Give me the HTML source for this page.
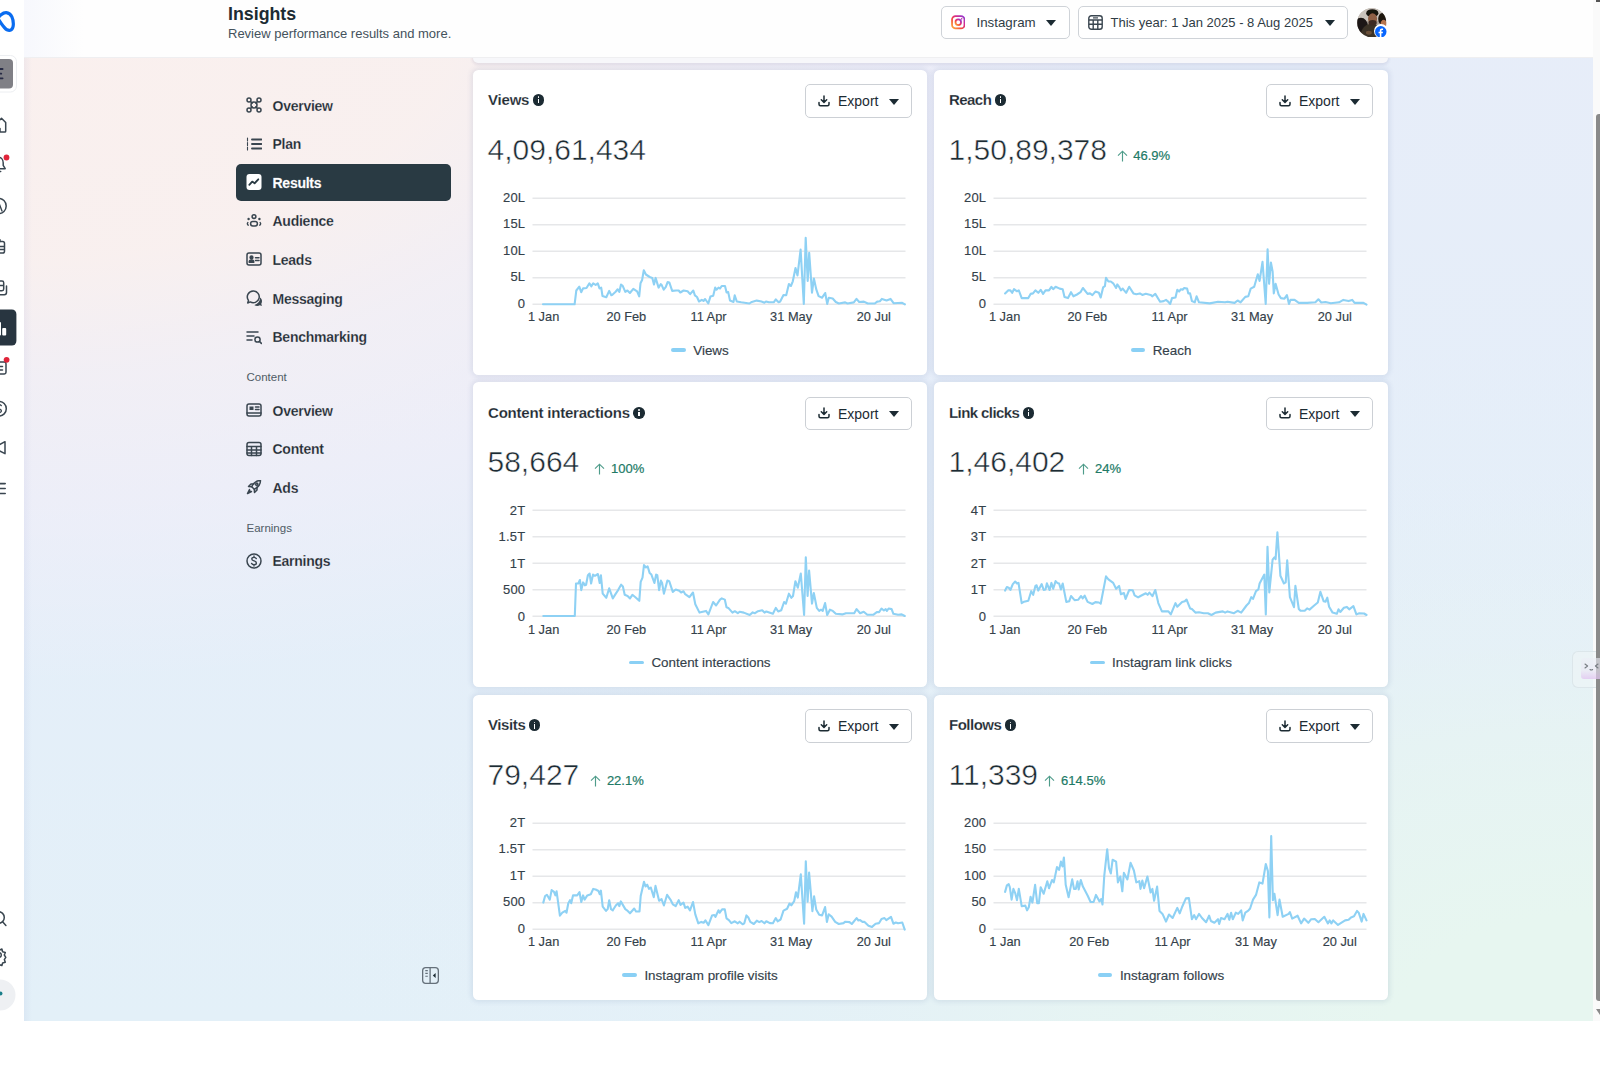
<!DOCTYPE html>
<html><head><meta charset="utf-8"><style>
*{box-sizing:border-box;margin:0;padding:0}
html,body{width:1600px;height:1067px;overflow:hidden;background:#fff;font-family:"Liberation Sans", sans-serif;color:#1c2b33}
#main{position:absolute;left:24px;top:0;width:1569px;height:1021px;overflow:hidden;
 background:radial-gradient(ellipse 1100px 650px at 0px 0px,rgba(250,240,238,1) 0%,rgba(250,240,238,0.92) 40%,rgba(247,239,243,0.68) 58%,rgba(244,238,248,0.48) 80%,rgba(240,238,248,0) 105%),radial-gradient(ellipse 1300px 700px at 1569px 1021px,rgba(231,246,240,1) 0%,rgba(231,246,240,1) 15%,rgba(231,245,241,0.7) 40%,rgba(230,243,244,0.45) 55%,rgba(230,241,247,0.2) 75%,rgba(230,240,248,0) 100%),linear-gradient(to bottom,#e7edf9 0%,#e5eef9 45%,#e3f0f8 100%)}
#hdr{position:absolute;left:0;top:0;width:1569px;height:58px;background:linear-gradient(to right,#f7f8fd 0,#fefefe 60px);border-bottom:1px solid #efeff1}
.strip{position:absolute;left:449px;top:57px;width:915px;height:5.5px;background:#f7f7fa;border-radius:0 0 5px 5px;box-shadow:0 1px 3px 1px rgba(60,60,120,0.10)}
.card{position:absolute;width:454px;height:305px;background:#fff;border-radius:5.5px;box-shadow:0 0 5px 2px rgba(60,90,150,0.11)}
.ttl{position:absolute;left:15px;top:20.5px;height:20px;line-height:20px;font-size:15px;font-weight:700;letter-spacing:-0.2px;white-space:nowrap;color:#1e2a32;-webkit-text-stroke:0.3px rgba(255,255,255,0.5)}
.info{position:relative;display:inline-block;vertical-align:top;margin-left:3.5px;top:4.3px;width:11.5px;height:11.5px;border-radius:50%;background:#1c2b33}
.info::before{content:"";position:absolute;left:5px;top:2.2px;width:1.6px;height:1.6px;background:#fff;border-radius:1px}
.info::after{content:"";position:absolute;left:5px;top:4.8px;width:1.6px;height:4.4px;background:#fff}
.exp{position:absolute;left:332px;top:14.5px;width:107px;height:33.5px;border:1px solid #ccd0d5;border-radius:5px;background:#fff}
.expt{position:absolute;left:32px;top:7px;font-size:14px;line-height:18px;white-space:nowrap}
.tri{position:absolute;width:0;height:0;border-left:5.2px solid transparent;border-right:5.2px solid transparent;border-top:6px solid #1c2b33}
.num{position:absolute;left:14.5px;top:60px;font-size:30px;line-height:40px;white-space:nowrap;color:#1c2b33;-webkit-text-stroke:0.5px #fff}
.pct{position:absolute;top:81.5px;height:16px;font-size:13px;line-height:16px;color:#217a66;white-space:nowrap;-webkit-text-stroke:0.2px #217a66}
.plot{position:absolute;left:0;top:0}
.yl{position:absolute;left:0;width:52.3px;text-align:right;font-size:13px;letter-spacing:0.2px;line-height:16px;color:#34414a;-webkit-text-stroke:0.15px #34414a}
.xl{position:absolute;top:239.3px;width:80px;text-align:center;font-size:12.8px;line-height:16px;color:#34414a;-webkit-text-stroke:0.15px #34414a}
.leg{position:absolute;left:0;top:272px;width:454px;text-align:center;font-size:13.4px;line-height:17px;color:#34414a;white-space:nowrap;-webkit-text-stroke:0.15px #34414a}
.sw{display:inline-block;width:14.5px;height:3.2px;border-radius:2px;background:#8ad0f5;vertical-align:middle;margin-right:7.5px;position:relative;top:-1px}
.sel{position:absolute;left:211.7px;width:215px;height:36.5px;background:#293a43;border-radius:5px}
.nic{position:absolute;left:222px}
.nt{position:absolute;left:248.5px;height:20px;line-height:20px;font-size:14px;letter-spacing:-0.25px;font-weight:700;white-space:nowrap;color:#1e2a32;-webkit-text-stroke:0.35px rgba(243,239,244,0.55)}
.sec{position:absolute;left:222.5px;height:16px;line-height:16px;font-size:11.5px;color:#4f5b65}
.hbtn{position:absolute;top:6px;height:33px;border:1px solid #cfd3d8;border-radius:5px;background:#fff}
</style></head><body>

<div id="main">
<div class="strip"></div><div style="position:absolute;left:0;top:57px;width:8px;height:964px;background:linear-gradient(to right,rgba(110,120,190,0.07),rgba(110,120,190,0))"></div>
<svg class="nic" style="top:97px" width="16" height="16" viewBox="0 0 16 16" fill="none" stroke="#3a4650" stroke-width="1.5" stroke-linecap="round" stroke-linejoin="round"><circle cx="3" cy="3" r="2" /><circle cx="13" cy="3" r="2"/><circle cx="3" cy="13" r="2"/><circle cx="13" cy="13" r="2"/><circle cx="8" cy="8" r="3"/><path d="M4.5 4.5l1.6 1.6M11.5 4.5L9.9 6.1M4.5 11.5l1.6-1.6M11.5 11.5L9.9 9.9"/></svg><div class="nt" style="top:95.5px">Overview</div><svg class="nic" style="top:135.5px" width="16" height="16" viewBox="0 0 16 16" fill="none" stroke="#3a4650" stroke-width="1.5" stroke-linecap="round" stroke-linejoin="round"><path d="M6 3.5h9.5M6 8h9.5M6 12.5h9.5" stroke-width="1.9"/><path d="M1.5 2v3M1.5 6.5v3M1.5 11v3" stroke-width="1.1"/></svg><div class="nt" style="top:134.0px">Plan</div><div class="sel" style="top:164px"></div><svg class="nic" style="top:174px" width="16" height="16" viewBox="0 0 16 16"><rect x="0.5" y="0" width="15" height="16" rx="3" fill="#fff"/><path d="M3.3 10.8L6.2 7.6 8.6 9.3 12.3 5.3" fill="none" stroke="#293a43" stroke-width="1.8" stroke-linecap="round" stroke-linejoin="round"/></svg><div class="nt" style="top:172.5px;color:#fff">Results</div><svg class="nic" style="top:212.5px" width="16" height="16" viewBox="0 0 16 16" fill="none" stroke="#3a4650" stroke-width="1.5" stroke-linecap="round" stroke-linejoin="round"><circle cx="8" cy="3.6" r="1.9"/><rect x="4.6" y="8.6" width="6.8" height="4.4" rx="2.2"/><circle cx="2.6" cy="6" r="1.2" fill="#3a4650" stroke="none"/><circle cx="13.4" cy="6" r="1.2" fill="#3a4650" stroke="none"/><path d="M2.2 12.2c-.9-.6-1.1-1.8-.4-2.6M13.8 12.2c.9-.6 1.1-1.8.4-2.6" stroke-width="1.4"/></svg><div class="nt" style="top:211.0px">Audience</div><svg class="nic" style="top:251px" width="16" height="16" viewBox="0 0 16 16" fill="none" stroke="#3a4650" stroke-width="1.5" stroke-linecap="round" stroke-linejoin="round"><rect x="1" y="2" width="14" height="12" rx="2"/><circle cx="5.5" cy="6.5" r="1.4" fill="#3a4650"/><path d="M3.2 11.2c0-1.4 1-2.2 2.3-2.2s2.3.8 2.3 2.2z" fill="#3a4650"/><path d="M9.5 6.8h3.5M9.5 9.5h3.5"/></svg><div class="nt" style="top:249.5px">Leads</div><svg class="nic" style="top:290px" width="16" height="16" viewBox="0 0 16 16" fill="none" stroke="#3a4650" stroke-width="1.5" stroke-linecap="round" stroke-linejoin="round"><path d="M7.4 1a5.9 5.9 0 1 1-3.2 10.9L1.7 13l.8-2.6A5.9 5.9 0 0 1 7.4 1z"/><path d="M14.2 7.6c1.1.9 1.8 2.2 1.8 3.7 0 .9-.3 1.8-.7 2.5l.6 2.1-2.1-.6c-.7.4-1.6.6-2.5.6-1.1 0-2.2-.3-3-.9 3.2-.6 5.6-3.5 5.9-7.4z" fill="#3a4650" stroke="none"/></svg><div class="nt" style="top:288.5px">Messaging</div><svg class="nic" style="top:328.5px" width="16" height="16" viewBox="0 0 16 16" fill="none" stroke="#3a4650" stroke-width="1.5" stroke-linecap="round" stroke-linejoin="round"><path d="M1 3h11M1 7h7M1 11h5"/><circle cx="11.5" cy="10.5" r="2.6"/><path d="M13.4 12.4l2 2"/></svg><div class="nt" style="top:327.0px">Benchmarking</div><svg class="nic" style="top:402px" width="16" height="16" viewBox="0 0 16 16" fill="none" stroke="#3a4650" stroke-width="1.5" stroke-linecap="round" stroke-linejoin="round"><rect x="1" y="2" width="14" height="12" rx="2"/><path d="M1 11h14"/><rect x="3.5" y="4.5" width="4" height="3.5" fill="#3a4650" stroke="none"/><path d="M9.5 5h3.5M9.5 7.5h3.5"/></svg><div class="nt" style="top:400.5px">Overview</div><svg class="nic" style="top:440.5px" width="16" height="16" viewBox="0 0 16 16" fill="none" stroke="#3a4650" stroke-width="1.5" stroke-linecap="round" stroke-linejoin="round"><rect x="1" y="1.5" width="14" height="13" rx="2"/><path d="M1 5.5h14M1 9h14M1 12h14M5.5 5.5v9M10.5 5.5v9"/></svg><div class="nt" style="top:439.0px">Content</div><svg class="nic" style="top:479px" width="16" height="16" viewBox="0 0 16 16" fill="none" stroke="#3a4650" stroke-width="1.5" stroke-linecap="round" stroke-linejoin="round"><path d="M14.5 1.5c-4 0-7 2.5-8.8 6.2l2.6 2.6c3.7-1.8 6.2-4.8 6.2-8.8z"/><path d="M5.7 7.7L2.5 7.5 5 5h3M8.3 10.3l.2 3.2L11 11V8"/><circle cx="10.8" cy="5.2" r="1.1"/><path d="M3.5 10.5l-2 4 4-2" fill="#3a4650"/></svg><div class="nt" style="top:477.5px">Ads</div><svg class="nic" style="top:552.5px" width="16" height="16" viewBox="0 0 16 16" fill="none" stroke="#3a4650" stroke-width="1.5" stroke-linecap="round" stroke-linejoin="round"><circle cx="8" cy="8" r="7"/><path d="M10.3 5.6c-.4-.8-1.2-1.2-2.3-1.2-1.3 0-2.2.7-2.2 1.7 0 2.4 4.6 1.3 4.6 3.8 0 1-.9 1.8-2.4 1.8-1.1 0-2-.5-2.4-1.3M8 3v1.4M8 11.7v1.3" stroke-width="1.4"/></svg><div class="nt" style="top:551.0px">Earnings</div><div class="sec" style="top:369px">Content</div><div class="sec" style="top:520px">Earnings</div>
<svg style="position:absolute;left:398px;top:967px" width="17" height="17" viewBox="0 0 17 17" fill="none" stroke="#65707a" stroke-width="1.3"><rect x="0.65" y="0.65" width="15.7" height="15.7" rx="3"/><path d="M8.1 0.6v15.8"/><path d="M3.3 3.6h2.5M3.3 6.4h2.5M3.3 9.2h2.5" stroke-width="1.1"/><path d="M13.6 6v5l-2.8-2.5z" fill="#1c2b33" stroke="none"/></svg>
</div>
<div id="cards">
<div class="card" style="left:473px;top:69.5px">
<div class="ttl" style="letter-spacing:-0.2px">Views<span class="info"></span></div>
<div class="exp"><svg width="12" height="12" viewBox="0 0 12 12" style="position:absolute;left:12px;top:9.5px"><path d="M6 1v6.2M3.3 4.8L6 7.4l2.7-2.6M1 7.5v1.8c0 .9.6 1.5 1.5 1.5h7c.9 0 1.5-.6 1.5-1.5V7.5" fill="none" stroke="#1c2b33" stroke-width="1.5" stroke-linecap="round" stroke-linejoin="round"/></svg><span class="expt">Export</span><span class="tri" style="left:83px;top:13.5px"></span></div>
<div class="num">4,09,61,434</div>
<svg class="plot" width="454" height="305" viewBox="0 0 454 305"><line x1="59.5" x2="432.5" y1="128.3" y2="128.3" stroke="#e6e7e9" stroke-width="1.5"/><line x1="59.5" x2="432.5" y1="154.8" y2="154.8" stroke="#e6e7e9" stroke-width="1.5"/><line x1="59.5" x2="432.5" y1="181.3" y2="181.3" stroke="#e6e7e9" stroke-width="1.5"/><line x1="59.5" x2="432.5" y1="207.8" y2="207.8" stroke="#e6e7e9" stroke-width="1.5"/><line x1="59.5" x2="432.5" y1="234.3" y2="234.3" stroke="#e6e7e9" stroke-width="1.5"/><polyline points="70.0,234.3 101.6,234.3 103.3,220.5 106.3,216.7 108.2,222.2 110.1,218.4 113.5,218.0 116.4,213.3 118.4,216.3 120.2,213.3 122.7,215.0 124.8,213.3 126.5,218.4 128.2,217.6 129.5,226.0 133.3,227.3 136.2,220.9 138.3,225.2 139.4,224.7 142.6,221.8 144.7,219.3 146.4,221.8 148.0,214.6 149.7,215.9 152.3,221.8 154.4,220.5 156.9,223.0 160.3,218.8 164.1,221.4 166.2,226.4 167.5,213.3 169.1,210.0 170.8,200.3 172.9,204.5 176.7,207.0 179.3,207.9 181.0,214.6 182.6,207.9 185.6,217.6 187.7,214.2 188.6,214.8 190.7,219.7 192.7,217.2 194.7,212.0 196.3,212.4 199.2,220.9 203.2,220.5 205.7,220.5 207.3,222.5 210.6,220.5 214.6,221.3 217.1,224.1 220.3,220.5 221.9,225.4 224.0,227.0 226.0,231.5 228.8,229.8 230.5,231.0 232.1,229.0 235.3,233.5 237.4,226.6 240.2,225.8 242.2,217.6 243.5,219.7 245.5,217.6 247.1,218.5 248.7,216.0 252.0,216.0 253.6,222.5 255.2,222.1 257.0,230.6 260.5,231.9 261.7,225.4 263.8,231.5 268.2,232.3 276.4,233.5 278.8,231.9 283.7,230.6 288.5,231.5 291.4,232.7 293.0,231.5 295.9,232.3 300.7,232.3 302.8,229.4 305.6,232.3 307.2,231.5 310.5,225.0 313.2,225.3 315.9,214.0 317.9,216.0 319.8,211.3 322.5,198.0 324.5,205.4 327.6,179.6 330.8,233.9 332.7,167.9 334.7,210.9 336.2,182.8 339.0,222.6 340.9,208.5 343.2,219.1 345.6,226.1 349.1,227.7 352.2,223.0 354.2,233.9 355.8,227.7 359.7,228.5 362.8,232.0 365.9,233.5 372.2,232.4 374.5,233.5 380.8,232.4 383.5,228.9 386.2,232.0 390.9,231.6 394.8,233.5 401.8,233.5 404.2,231.6 406.9,231.2 408.9,228.9 413.6,230.4 417.5,228.9 420.6,233.2 429.2,232.8 431.9,234.3" fill="none" stroke="#8ed1f4" stroke-width="2.1" stroke-linejoin="round" stroke-linecap="round"/></svg>
<div class="yl" style="top:120.30000000000001px">20L</div>
<div class="yl" style="top:146.8px">15L</div>
<div class="yl" style="top:173.3px">10L</div>
<div class="yl" style="top:199.8px">5L</div>
<div class="yl" style="top:226.3px">0</div>
<div class="xl" style="left:30.599999999999994px">1 Jan</div>
<div class="xl" style="left:113.30000000000001px">20 Feb</div>
<div class="xl" style="left:195.5px">11 Apr</div>
<div class="xl" style="left:278.1px">31 May</div>
<div class="xl" style="left:360.8px">20 Jul</div>
<div class="leg"><span class="sw"></span>Views</div>
</div><div class="card" style="left:934px;top:69.5px">
<div class="ttl" style="letter-spacing:-0.55px">Reach<span class="info"></span></div>
<div class="exp"><svg width="12" height="12" viewBox="0 0 12 12" style="position:absolute;left:12px;top:9.5px"><path d="M6 1v6.2M3.3 4.8L6 7.4l2.7-2.6M1 7.5v1.8c0 .9.6 1.5 1.5 1.5h7c.9 0 1.5-.6 1.5-1.5V7.5" fill="none" stroke="#1c2b33" stroke-width="1.5" stroke-linecap="round" stroke-linejoin="round"/></svg><span class="expt">Export</span><span class="tri" style="left:83px;top:13.5px"></span></div>
<div class="num">1,50,89,378</div>
<div class="pct" style="left:183px"><svg width="11" height="12" viewBox="0 0 11 12" style="position:absolute;left:-0.5px;top:-1px"><path d="M5.5 11.4V1.3M1 5.6L5.5 1.2 10 5.6" fill="none" stroke="#4e9c8a" stroke-width="1.15"/></svg><span style="position:absolute;left:16.3px;top:-3px">46.9%</span></div>
<svg class="plot" width="454" height="305" viewBox="0 0 454 305"><line x1="59.5" x2="432.5" y1="128.3" y2="128.3" stroke="#e6e7e9" stroke-width="1.5"/><line x1="59.5" x2="432.5" y1="154.8" y2="154.8" stroke="#e6e7e9" stroke-width="1.5"/><line x1="59.5" x2="432.5" y1="181.3" y2="181.3" stroke="#e6e7e9" stroke-width="1.5"/><line x1="59.5" x2="432.5" y1="207.8" y2="207.8" stroke="#e6e7e9" stroke-width="1.5"/><line x1="59.5" x2="432.5" y1="234.3" y2="234.3" stroke="#e6e7e9" stroke-width="1.5"/><polyline points="71.1,223.4 74.1,220.4 76.4,220.4 78.2,222.8 80.0,219.2 83.0,221.3 84.8,220.4 87.7,228.1 94.3,228.1 96.6,223.9 99.0,223.4 101.4,220.4 104.3,222.8 106.7,219.8 109.1,223.9 111.5,220.4 115.0,220.4 117.4,216.8 119.2,219.2 121.6,216.8 125.7,218.6 128.7,219.2 130.5,226.9 134.0,228.1 137.0,222.2 139.4,226.3 143.0,224.5 146.5,222.2 148.9,218.0 153.6,223.9 156.0,223.4 158.4,225.1 161.4,221.6 164.9,222.8 166.7,227.5 169.1,217.4 170.9,216.2 172.0,207.9 174.4,211.5 176.8,211.5 179.2,213.3 182.1,218.0 183.3,214.4 185.1,216.8 186.9,220.4 188.7,218.6 192.2,222.8 195.2,216.8 199.4,223.4 202.3,224.2 205.9,223.4 208.3,224.9 211.8,223.7 216.6,224.9 218.4,226.3 221.3,223.9 226.1,231.7 229.6,231.1 232.0,229.9 233.8,231.3 236.2,234.0 238.0,228.1 241.5,227.5 243.3,219.8 245.1,221.6 246.9,219.2 248.6,219.8 250.2,218.0 253.1,218.6 254.3,223.4 256.1,223.4 257.9,231.1 260.8,232.3 262.6,226.3 265.0,232.3 275.7,233.4 284.0,231.7 291.1,232.3 293.5,231.7 300.6,232.9 303.6,230.5 306.6,232.3 311.3,226.9 314.3,226.3 316.7,218.6 320.2,216.8 323.8,204.3 325.6,210.9 328.5,191.9 331.7,234.0 333.6,179.4 335.1,213.8 336.9,192.5 338.6,201.4 339.8,223.4 341.6,213.8 344.6,224.5 346.9,228.1 350.5,228.7 352.9,225.1 355.0,234.0 356.5,229.9 360.6,229.9 364.8,232.9 373.1,232.9 381.4,232.3 384.4,229.3 387.3,232.5 391.5,232.0 396.8,233.2 405.1,232.3 409.3,229.9 414.6,231.1 418.2,229.9 420.6,232.9 429.5,232.9 432.5,234.6" fill="none" stroke="#8ed1f4" stroke-width="2.1" stroke-linejoin="round" stroke-linecap="round"/></svg>
<div class="yl" style="top:120.30000000000001px">20L</div>
<div class="yl" style="top:146.8px">15L</div>
<div class="yl" style="top:173.3px">10L</div>
<div class="yl" style="top:199.8px">5L</div>
<div class="yl" style="top:226.3px">0</div>
<div class="xl" style="left:30.599999999999994px">1 Jan</div>
<div class="xl" style="left:113.30000000000001px">20 Feb</div>
<div class="xl" style="left:195.5px">11 Apr</div>
<div class="xl" style="left:278.1px">31 May</div>
<div class="xl" style="left:360.8px">20 Jul</div>
<div class="leg"><span class="sw"></span>Reach</div>
</div><div class="card" style="left:473px;top:382.3px">
<div class="ttl" style="letter-spacing:-0.2px">Content interactions<span class="info"></span></div>
<div class="exp"><svg width="12" height="12" viewBox="0 0 12 12" style="position:absolute;left:12px;top:9.5px"><path d="M6 1v6.2M3.3 4.8L6 7.4l2.7-2.6M1 7.5v1.8c0 .9.6 1.5 1.5 1.5h7c.9 0 1.5-.6 1.5-1.5V7.5" fill="none" stroke="#1c2b33" stroke-width="1.5" stroke-linecap="round" stroke-linejoin="round"/></svg><span class="expt">Export</span><span class="tri" style="left:83px;top:13.5px"></span></div>
<div class="num">58,664</div>
<div class="pct" style="left:121.75px"><svg width="11" height="12" viewBox="0 0 11 12" style="position:absolute;left:-0.5px;top:-1px"><path d="M5.5 11.4V1.3M1 5.6L5.5 1.2 10 5.6" fill="none" stroke="#4e9c8a" stroke-width="1.15"/></svg><span style="position:absolute;left:16.3px;top:-3px">100%</span></div>
<svg class="plot" width="454" height="305" viewBox="0 0 454 305"><line x1="59.5" x2="432.5" y1="128.3" y2="128.3" stroke="#e6e7e9" stroke-width="1.5"/><line x1="59.5" x2="432.5" y1="154.8" y2="154.8" stroke="#e6e7e9" stroke-width="1.5"/><line x1="59.5" x2="432.5" y1="181.3" y2="181.3" stroke="#e6e7e9" stroke-width="1.5"/><line x1="59.5" x2="432.5" y1="207.8" y2="207.8" stroke="#e6e7e9" stroke-width="1.5"/><line x1="59.5" x2="432.5" y1="234.3" y2="234.3" stroke="#e6e7e9" stroke-width="1.5"/><polyline points="70.3,234.0 101.8,234.0 103.0,201.5 105.3,201.5 106.9,198.0 108.3,208.1 110.1,200.4 111.9,203.3 113.1,202.7 114.9,193.2 116.6,191.5 118.1,201.5 120.0,192.6 122.0,193.8 124.9,192.0 126.7,201.0 127.9,193.2 129.7,211.6 133.3,215.8 136.2,206.3 139.8,216.4 142.8,211.6 145.1,208.1 148.1,202.7 149.9,204.5 151.7,212.8 154.6,214.0 157.0,216.4 159.4,212.8 162.4,215.2 166.3,218.8 167.7,199.8 169.5,195.6 171.0,183.1 173.0,185.5 174.6,184.3 176.6,190.9 178.4,192.6 181.4,201.0 183.1,192.6 184.3,193.2 186.1,208.1 187.9,198.6 189.1,201.0 190.9,211.7 194.4,198.6 196.2,199.2 199.8,209.9 202.7,207.5 206.3,208.7 208.1,210.5 210.5,209.3 212.2,212.2 216.4,215.2 220.0,210.5 222.3,222.3 226.5,230.6 233.0,228.9 235.4,232.4 240.1,220.0 243.1,223.5 247.0,217.6 248.8,216.4 251.8,217.6 253.5,225.3 255.3,225.9 259.5,230.6 261.8,229.2 264.8,231.2 266.6,229.7 270.8,230.6 276.7,233.0 279.7,230.4 282.0,231.2 285.0,229.2 289.2,228.3 291.5,230.6 293.3,229.5 299.9,231.8 302.8,225.9 305.2,229.5 308.2,228.3 311.1,220.0 312.9,221.7 315.9,211.7 318.3,215.8 320.0,214.0 322.4,199.2 324.8,205.7 327.8,191.5 331.1,233.0 332.8,175.4 334.6,214.0 336.1,188.5 339.0,221.7 340.8,211.0 343.8,225.9 346.2,228.9 348.0,227.7 349.7,228.9 352.1,221.1 354.2,233.0 356.9,227.7 359.8,228.9 362.8,231.8 369.3,232.4 372.9,231.2 381.2,231.2 383.6,227.1 387.1,231.2 390.7,229.7 394.3,232.8 400.2,232.8 403.8,230.1 406.1,230.1 408.5,226.5 410.9,228.5 412.7,227.1 413.9,228.9 415.6,226.5 418.6,227.1 420.4,231.8 425.1,232.8 428.7,232.4 431.7,234.0" fill="none" stroke="#8ed1f4" stroke-width="2.1" stroke-linejoin="round" stroke-linecap="round"/></svg>
<div class="yl" style="top:120.30000000000001px">2T</div>
<div class="yl" style="top:146.8px">1.5T</div>
<div class="yl" style="top:173.3px">1T</div>
<div class="yl" style="top:199.8px">500</div>
<div class="yl" style="top:226.3px">0</div>
<div class="xl" style="left:30.599999999999994px">1 Jan</div>
<div class="xl" style="left:113.30000000000001px">20 Feb</div>
<div class="xl" style="left:195.5px">11 Apr</div>
<div class="xl" style="left:278.1px">31 May</div>
<div class="xl" style="left:360.8px">20 Jul</div>
<div class="leg"><span class="sw"></span>Content interactions</div>
</div><div class="card" style="left:934px;top:382.3px">
<div class="ttl" style="letter-spacing:-0.58px">Link clicks<span class="info"></span></div>
<div class="exp"><svg width="12" height="12" viewBox="0 0 12 12" style="position:absolute;left:12px;top:9.5px"><path d="M6 1v6.2M3.3 4.8L6 7.4l2.7-2.6M1 7.5v1.8c0 .9.6 1.5 1.5 1.5h7c.9 0 1.5-.6 1.5-1.5V7.5" fill="none" stroke="#1c2b33" stroke-width="1.5" stroke-linecap="round" stroke-linejoin="round"/></svg><span class="expt">Export</span><span class="tri" style="left:83px;top:13.5px"></span></div>
<div class="num">1,46,402</div>
<div class="pct" style="left:144.75px"><svg width="11" height="12" viewBox="0 0 11 12" style="position:absolute;left:-0.5px;top:-1px"><path d="M5.5 11.4V1.3M1 5.6L5.5 1.2 10 5.6" fill="none" stroke="#4e9c8a" stroke-width="1.15"/></svg><span style="position:absolute;left:16.3px;top:-3px">24%</span></div>
<svg class="plot" width="454" height="305" viewBox="0 0 454 305"><line x1="59.5" x2="432.5" y1="128.3" y2="128.3" stroke="#e6e7e9" stroke-width="1.5"/><line x1="59.5" x2="432.5" y1="154.8" y2="154.8" stroke="#e6e7e9" stroke-width="1.5"/><line x1="59.5" x2="432.5" y1="181.3" y2="181.3" stroke="#e6e7e9" stroke-width="1.5"/><line x1="59.5" x2="432.5" y1="207.8" y2="207.8" stroke="#e6e7e9" stroke-width="1.5"/><line x1="59.5" x2="432.5" y1="234.3" y2="234.3" stroke="#e6e7e9" stroke-width="1.5"/><polyline points="71.1,208.6 72.9,205.1 74.7,205.7 76.4,208.0 78.8,202.1 81.2,199.5 83.0,201.5 84.5,200.9 87.7,221.1 90.1,219.7 94.3,218.7 97.2,209.2 99.2,212.8 101.4,203.9 102.6,203.3 104.3,208.6 107.7,202.1 109.7,208.0 111.5,207.4 112.9,201.3 115.6,208.0 117.4,200.9 119.2,206.8 121.6,199.1 123.3,200.9 125.1,201.5 126.9,207.4 128.7,201.5 132.3,219.9 135.2,219.3 137.0,214.0 140.6,218.1 144.1,217.8 147.1,214.0 148.7,216.3 150.7,213.7 153.6,219.9 158.4,222.0 161.4,220.1 164.9,220.5 166.7,221.7 172.0,194.4 174.4,197.3 179.2,200.9 182.1,206.8 185.1,203.9 186.9,212.2 189.9,211.0 191.6,216.9 195.2,208.0 198.8,208.3 200.6,213.4 204.1,215.4 206.5,214.0 211.8,211.3 213.6,212.8 215.4,210.6 218.4,214.2 221.3,208.0 224.3,221.1 227.9,229.4 234.4,229.4 236.8,232.4 241.5,221.1 243.3,224.7 248.1,219.9 250.8,219.3 252.5,217.5 256.1,226.4 257.9,227.0 261.4,230.6 265.0,230.3 269.8,231.2 273.9,231.2 277.5,233.0 281.6,230.6 288.8,229.4 291.1,230.6 293.5,229.4 300.0,231.2 303.6,228.8 307.2,230.6 312.5,223.5 314.9,221.1 317.3,215.1 319.0,216.9 322.0,209.2 324.4,207.4 325.6,201.5 330.3,192.6 331.8,232.4 333.5,164.7 335.3,210.4 338.6,177.7 340.4,175.4 341.6,177.1 343.4,150.4 346.4,193.8 349.9,201.5 351.7,200.3 353.2,178.3 355.9,215.1 360.0,225.2 361.4,203.9 364.8,227.0 366.5,228.8 370.7,228.8 373.1,226.4 375.5,227.6 380.2,223.5 383.8,220.5 386.4,209.8 389.7,219.3 391.5,219.7 393.3,215.7 395.1,224.7 398.6,230.6 402.8,231.8 404.5,227.3 406.3,230.0 409.9,225.8 412.9,224.9 415.2,227.3 419.4,224.1 422.4,232.4 425.3,231.2 430.1,231.5 432.5,233.0" fill="none" stroke="#8ed1f4" stroke-width="2.1" stroke-linejoin="round" stroke-linecap="round"/></svg>
<div class="yl" style="top:120.30000000000001px">4T</div>
<div class="yl" style="top:146.8px">3T</div>
<div class="yl" style="top:173.3px">2T</div>
<div class="yl" style="top:199.8px">1T</div>
<div class="yl" style="top:226.3px">0</div>
<div class="xl" style="left:30.599999999999994px">1 Jan</div>
<div class="xl" style="left:113.30000000000001px">20 Feb</div>
<div class="xl" style="left:195.5px">11 Apr</div>
<div class="xl" style="left:278.1px">31 May</div>
<div class="xl" style="left:360.8px">20 Jul</div>
<div class="leg"><span class="sw"></span>Instagram link clicks</div>
</div><div class="card" style="left:473px;top:694.6px">
<div class="ttl" style="letter-spacing:-0.4px">Visits<span class="info"></span></div>
<div class="exp"><svg width="12" height="12" viewBox="0 0 12 12" style="position:absolute;left:12px;top:9.5px"><path d="M6 1v6.2M3.3 4.8L6 7.4l2.7-2.6M1 7.5v1.8c0 .9.6 1.5 1.5 1.5h7c.9 0 1.5-.6 1.5-1.5V7.5" fill="none" stroke="#1c2b33" stroke-width="1.5" stroke-linecap="round" stroke-linejoin="round"/></svg><span class="expt">Export</span><span class="tri" style="left:83px;top:13.5px"></span></div>
<div class="num">79,427</div>
<div class="pct" style="left:117.6px"><svg width="11" height="12" viewBox="0 0 11 12" style="position:absolute;left:-0.5px;top:-1px"><path d="M5.5 11.4V1.3M1 5.6L5.5 1.2 10 5.6" fill="none" stroke="#4e9c8a" stroke-width="1.15"/></svg><span style="position:absolute;left:16.3px;top:-3px">22.1%</span></div>
<svg class="plot" width="454" height="305" viewBox="0 0 454 305"><line x1="59.5" x2="432.5" y1="128.3" y2="128.3" stroke="#e6e7e9" stroke-width="1.5"/><line x1="59.5" x2="432.5" y1="154.8" y2="154.8" stroke="#e6e7e9" stroke-width="1.5"/><line x1="59.5" x2="432.5" y1="181.3" y2="181.3" stroke="#e6e7e9" stroke-width="1.5"/><line x1="59.5" x2="432.5" y1="207.8" y2="207.8" stroke="#e6e7e9" stroke-width="1.5"/><line x1="59.5" x2="432.5" y1="234.3" y2="234.3" stroke="#e6e7e9" stroke-width="1.5"/><polyline points="70.3,207.6 72.1,201.0 73.9,199.8 76.8,204.6 78.6,195.1 81.0,196.9 82.4,200.4 83.6,196.3 86.9,220.6 89.3,217.7 92.3,215.9 93.5,217.7 95.3,208.2 97.0,205.2 98.2,208.2 100.0,200.4 104.2,200.4 106.5,197.2 108.3,207.0 110.1,200.4 111.6,204.6 114.3,200.4 117.8,199.2 120.2,193.9 122.6,194.5 125.5,196.0 126.7,199.2 127.9,195.7 129.7,211.7 133.0,215.9 134.7,214.1 136.2,205.2 138.0,214.1 139.8,215.3 142.8,210.5 145.1,208.2 146.3,211.1 147.8,206.4 152.3,214.1 154.0,215.3 157.0,218.3 161.2,213.5 163.0,216.5 166.5,216.5 167.7,201.0 171.0,186.8 172.5,191.5 174.2,189.7 176.0,193.9 177.8,192.5 180.8,202.2 182.5,190.9 186.1,205.8 188.5,204.0 190.9,210.5 194.1,199.8 197.4,204.6 199.8,209.3 202.7,211.1 205.7,205.2 207.5,209.9 210.5,207.6 212.2,212.9 214.6,211.7 217.0,215.3 220.0,207.0 222.3,219.4 225.3,228.3 228.3,226.9 230.6,227.8 232.4,225.4 235.4,230.1 239.0,220.6 241.3,220.0 242.5,221.8 245.5,215.3 246.7,217.7 249.1,214.3 251.8,214.4 253.5,223.4 255.9,225.1 258.3,228.1 261.8,226.3 264.8,228.3 266.6,226.7 269.6,229.3 271.3,228.3 273.4,220.4 275.5,222.8 277.3,226.9 280.8,229.0 283.8,225.7 286.2,227.1 288.6,226.0 291.5,228.3 293.3,226.3 296.9,228.1 299.9,228.3 302.8,223.1 304.6,226.3 307.6,224.5 310.5,215.6 314.1,213.8 316.5,208.5 318.3,210.3 321.2,206.1 323.0,197.2 324.8,202.6 327.8,179.4 331.1,228.7 332.8,166.3 334.6,206.7 336.1,177.6 339.4,216.2 341.1,201.4 343.2,214.4 346.2,219.8 349.1,220.4 352.1,212.1 353.9,226.9 355.7,219.2 358.6,221.6 362.2,226.9 365.8,229.0 370.5,228.1 372.3,226.7 376.5,227.1 378.8,229.0 383.6,223.1 385.4,225.5 387.1,225.1 389.5,226.9 391.3,226.7 395.5,230.7 399.0,231.9 402.6,228.7 406.1,228.1 408.5,223.9 411.5,223.1 413.3,225.1 418.0,221.9 420.4,228.7 422.8,227.5 425.1,228.3 429.3,227.5 431.7,234.6" fill="none" stroke="#8ed1f4" stroke-width="2.1" stroke-linejoin="round" stroke-linecap="round"/></svg>
<div class="yl" style="top:120.30000000000001px">2T</div>
<div class="yl" style="top:146.8px">1.5T</div>
<div class="yl" style="top:173.3px">1T</div>
<div class="yl" style="top:199.8px">500</div>
<div class="yl" style="top:226.3px">0</div>
<div class="xl" style="left:30.599999999999994px">1 Jan</div>
<div class="xl" style="left:113.30000000000001px">20 Feb</div>
<div class="xl" style="left:195.5px">11 Apr</div>
<div class="xl" style="left:278.1px">31 May</div>
<div class="xl" style="left:360.8px">20 Jul</div>
<div class="leg"><span class="sw"></span>Instagram profile visits</div>
</div><div class="card" style="left:934px;top:694.6px">
<div class="ttl" style="letter-spacing:-0.5px">Follows<span class="info"></span></div>
<div class="exp"><svg width="12" height="12" viewBox="0 0 12 12" style="position:absolute;left:12px;top:9.5px"><path d="M6 1v6.2M3.3 4.8L6 7.4l2.7-2.6M1 7.5v1.8c0 .9.6 1.5 1.5 1.5h7c.9 0 1.5-.6 1.5-1.5V7.5" fill="none" stroke="#1c2b33" stroke-width="1.5" stroke-linecap="round" stroke-linejoin="round"/></svg><span class="expt">Export</span><span class="tri" style="left:83px;top:13.5px"></span></div>
<div class="num">11,339</div>
<div class="pct" style="left:110.8px"><svg width="11" height="12" viewBox="0 0 11 12" style="position:absolute;left:-0.5px;top:-1px"><path d="M5.5 11.4V1.3M1 5.6L5.5 1.2 10 5.6" fill="none" stroke="#4e9c8a" stroke-width="1.15"/></svg><span style="position:absolute;left:16.3px;top:-3px">614.5%</span></div>
<svg class="plot" width="454" height="305" viewBox="0 0 454 305"><line x1="59.5" x2="432.5" y1="128.3" y2="128.3" stroke="#e6e7e9" stroke-width="1.5"/><line x1="59.5" x2="432.5" y1="154.8" y2="154.8" stroke="#e6e7e9" stroke-width="1.5"/><line x1="59.5" x2="432.5" y1="181.3" y2="181.3" stroke="#e6e7e9" stroke-width="1.5"/><line x1="59.5" x2="432.5" y1="207.8" y2="207.8" stroke="#e6e7e9" stroke-width="1.5"/><line x1="59.5" x2="432.5" y1="234.3" y2="234.3" stroke="#e6e7e9" stroke-width="1.5"/><polyline points="71.1,196.9 72.9,190.4 74.7,189.2 75.8,192.2 77.6,204.6 79.4,193.9 81.2,198.1 83.0,205.2 84.8,193.9 87.7,211.2 91.3,210.6 93.1,215.3 94.8,212.3 96.6,201.7 98.4,207.6 101.1,189.8 103.2,208.2 104.9,208.2 106.7,192.2 109.7,198.7 113.3,186.2 115.0,193.3 118.0,185.0 119.8,187.4 123.0,172.0 125.1,174.9 126.9,166.6 128.5,171.4 129.9,162.5 131.7,189.8 134.6,202.3 138.2,184.4 140.0,193.9 141.8,193.9 143.5,186.2 144.7,194.5 146.8,185.0 148.9,191.6 153.6,200.5 156.6,207.0 159.6,207.0 162.0,199.9 165.5,206.4 167.3,204.0 168.5,209.4 170.3,180.3 173.2,154.2 175.0,173.2 176.8,178.5 178.6,164.8 182.1,166.6 183.9,187.4 186.3,181.5 188.3,196.3 189.9,177.9 193.4,184.4 196.6,167.8 199.9,175.5 202.3,187.4 205.3,186.2 206.5,193.9 208.3,185.6 210.1,193.3 213.4,181.5 216.6,197.5 218.4,193.9 220.1,205.8 223.1,191.6 225.5,215.9 228.5,218.9 232.0,226.6 235.0,219.5 238.6,223.0 243.3,212.9 245.7,218.3 248.4,211.2 251.9,203.4 254.9,203.1 257.9,224.2 260.2,220.1 262.0,224.2 265.0,218.9 268.0,223.0 272.1,227.2 275.1,220.7 276.9,226.0 280.4,227.8 284.0,224.2 285.2,229.0 287.0,223.0 290.5,224.2 293.5,218.9 295.3,224.8 297.1,217.7 298.8,224.2 301.8,217.7 304.2,218.9 307.2,215.3 308.7,225.4 311.3,217.7 314.3,215.7 316.1,213.5 319.0,204.6 322.0,199.9 325.3,187.4 328.5,188.6 331.8,169.0 333.9,176.1 335.4,222.4 337.2,141.1 338.9,205.2 340.4,198.7 343.6,220.1 345.5,204.6 348.7,221.8 354.7,218.9 355.9,217.1 358.2,223.6 363.6,220.7 367.1,228.4 370.1,223.6 374.3,227.8 377.2,224.2 380.8,224.0 384.4,227.2 390.3,221.8 393.9,228.4 395.6,225.4 397.4,228.4 399.2,225.4 404.0,229.9 411.1,225.4 414.6,224.8 417.0,222.4 420.0,221.3 423.0,215.9 424.7,217.7 427.7,226.6 429.5,218.9 432.5,225.4" fill="none" stroke="#8ed1f4" stroke-width="2.1" stroke-linejoin="round" stroke-linecap="round"/></svg>
<div class="yl" style="top:120.30000000000001px">200</div>
<div class="yl" style="top:146.8px">150</div>
<div class="yl" style="top:173.3px">100</div>
<div class="yl" style="top:199.8px">50</div>
<div class="yl" style="top:226.3px">0</div>
<div class="xl" style="left:31px">1 Jan</div>
<div class="xl" style="left:115.1px">20 Feb</div>
<div class="xl" style="left:198.5px">11 Apr</div>
<div class="xl" style="left:281.9px">31 May</div>
<div class="xl" style="left:365.75px">20 Jul</div>
<div class="leg"><span class="sw"></span>Instagram follows</div>
</div>
</div>

<svg style="position:absolute;left:0;top:0" width="24" height="1021" viewBox="0 0 24 1021" fill="none" stroke="#3a4650" stroke-width="1.5" stroke-linecap="round" stroke-linejoin="round">
<path d="M-9 27.5C-5 20.5 1.5 12.4 6.3 12.7 11.6 13 13.6 19.5 13.3 25 13 30.3 9.8 31.2 7 29.8 3.8 28 0.6 22.5 -3 17" stroke="#0a6cf0" stroke-width="3.2"/>
<rect x="-8" y="55.5" width="24.5" height="36.5" rx="6" fill="#fff" stroke="#eceef1" stroke-width="1"/>
<rect x="-8" y="59" width="21" height="29.5" rx="4" fill="#808086" stroke="none"/>
<path d="M-2 69h4.6M-2 73.7h3.3M-2 78.3h4.6" stroke="#272b45" stroke-width="1.8"/>
<path d="M-4 124l5.5-5.8 4.2 4.3v8.7c0 .5-.4.9-.9.9H0v-3.5" />
<path d="M-2 157.2c3 0 5.2 2.2 5.2 5.6v2.6l2 3.3H-3M-1.5 171.6h2.2"/>
<circle cx="6.5" cy="157.5" r="2.9" fill="#e0243a" stroke="none"/>
<circle cx="-1.5" cy="206" r="7.7"/><path d="M-3 211l2.5-6.5 2.5 6.5" stroke-width="1.4"/>
<path d="M-4 241.5h6.6c1 0 1.9.8 1.9 1.8v8c0 1-.9 1.8-1.9 1.8H-4M-3 246.5h7M-3 249.5h7M0 239.8v2" stroke-width="1.5"/>
<path d="M-4 281h6c1 0 1.7.8 1.7 1.7v6.3c0 1-.8 1.7-1.7 1.7H-4M-3 285.5h6.3M6.5 286v6.5c0 1.2-1 2.2-2.2 2.2H-4"/>
<rect x="-8" y="309.5" width="24.4" height="36" rx="4.5" fill="#283540" stroke="none"/>
<rect x="2.2" y="328" width="4" height="7.5" rx="1" fill="#fff" stroke="none"/><rect x="-3" y="322" width="4" height="13.5" rx="1" fill="#fff" stroke="none"/>
<path d="M-4 362h8.3c.9 0 1.7.8 1.7 1.7v8.6c0 .9-.8 1.7-1.7 1.7H-4M-2 366.5h4.5M-2 370h4.5"/>
<circle cx="6.6" cy="359.8" r="2.9" fill="#e0243a" stroke="none"/>
<circle cx="-1" cy="408.7" r="7.3"/><path d="M1.3 405.6c-.5-.7-1.3-1-2.2-1M-1.5 412.6c1.5.2 2.9-.4 2.9-1.8 0-1.8-3-1.5-3-2.6" stroke-width="1.3"/>
<path d="M-4 446.5l9-4.8v12l-9-4.8"/>
<path d="M-3 483.6h8.2M-3 488.5h8.2M-3 493.5h8.2" stroke-width="1.6"/>
<circle cx="-1.5" cy="917.5" r="5.8"/><path d="M2.6 921.8l3.3 3.6"/>
<path d="M-3 948.5l2.3 1.5 2.6-1 .7 2.7 2.7.7-1 2.6 1.5 2.3-1.5 2.3 1 2.6-2.7.7-.7 2.7-2.6-1-2.3 1.5"/><circle cx="-1" cy="955" r="2.3"/>
<circle cx="0" cy="995" r="15.5" fill="#eef0f3" stroke="none"/>
<circle cx="0.6" cy="993.5" r="1.9" fill="#1b7f8a" stroke="none"/>
</svg>
<div style="position:absolute;left:1593px;top:0;width:7px;height:1021px;background:#fafafa"></div>
<div style="position:absolute;left:1596px;top:113.5px;width:5px;height:887px;border-radius:3px 0 0 3px;background:#8a8a8a"></div>
<div style="position:absolute;left:1596px;top:0;width:4px;height:2px;background:#555"></div>
<div style="position:absolute;left:1596px;top:1008.5px;width:0;height:0;border-left:4px solid transparent;border-right:4px solid transparent;border-top:6px solid #8a8a8a"></div>
<div style="position:absolute;left:1572px;top:651px;width:24px;height:36.5px;border-radius:6px 0 0 6px;border:1px solid #dce6ea;border-right:none;background:rgba(238,245,247,0.6)"></div>
<div style="position:absolute;left:1580.5px;top:658px;width:20px;height:21px;background:linear-gradient(180deg,rgba(236,238,246,0.6) 0%,rgba(234,230,244,0.6) 60%,rgba(225,195,240,0.75) 100%);border-radius:3px 0 0 3px"></div>
<svg style="position:absolute;left:1584px;top:662px" width="16" height="10" viewBox="0 0 16 10" fill="none" stroke="#777c82" stroke-width="1.1" stroke-linecap="round" stroke-linejoin="round"><path d="M1 2l2.6 2L1 6M6 7.5q1.3 1 2.6 0M14 2l-2.6 2L14 6"/></svg>
<div id="hdrwrap" style="position:absolute;left:24px;top:0;width:1569px;height:58px">
<div id="hdr"></div>
<div style="position:absolute;left:204px;top:1.8px;font-size:17.8px;font-weight:700;line-height:24px;white-space:nowrap">Insights</div>
<div style="position:absolute;left:204px;top:25.5px;font-size:13px;line-height:16px;color:#44525c;white-space:nowrap">Review performance results and more.</div>
</div>
<div class="hbtn" style="left:941px;width:129px"></div>
<svg style="position:absolute;left:950.5px;top:15px" width="14.5" height="14.5" viewBox="0 0 14 14"><defs><linearGradient id="ig" x1="0" y1="1" x2="1" y2="0"><stop offset="0" stop-color="#fdb53c"/><stop offset="0.35" stop-color="#f5503a"/><stop offset="0.65" stop-color="#d62b8a"/><stop offset="1" stop-color="#8a3ad8"/></linearGradient></defs><rect x="1" y="1" width="12" height="12" rx="3.4" fill="none" stroke="url(#ig)" stroke-width="1.7"/><circle cx="7" cy="7" r="2.7" fill="none" stroke="url(#ig)" stroke-width="1.7"/><circle cx="10.3" cy="3.7" r="0.8" fill="#b33aa8"/></svg>
<div style="position:absolute;left:976.5px;top:14.5px;font-size:13.3px;line-height:16px;color:#2f3c45;white-space:nowrap">Instagram</div>
<span class="tri" style="left:1046.4px;top:19.6px"></span>
<div class="hbtn" style="left:1077.5px;width:270px"></div>
<svg style="position:absolute;left:1088px;top:15px" width="15" height="15" viewBox="0 0 15 15" fill="none" stroke="#3a4650" stroke-width="1.4"><rect x="0.8" y="0.8" width="13.4" height="13.4" rx="2.5"/><path d="M0.8 5h13.4M0.8 9.2h13.4M5.2 5v9.2M9.8 5v9.2"/><path d="M5 2.9h5" stroke-width="1.2"/></svg>
<div style="position:absolute;left:1110.5px;top:14.5px;font-size:13px;line-height:16px;color:#2f3c45;white-space:nowrap">This year: 1 Jan 2025 - 8 Aug 2025</div>
<span class="tri" style="left:1324.6px;top:19.6px"></span>
<svg style="position:absolute;left:1357.3px;top:7.6px" width="29.6" height="29.6" viewBox="0 0 30 30"><defs><clipPath id="avc"><circle cx="15" cy="15" r="14.8"/></clipPath><filter id="avb"><feGaussianBlur stdDeviation="0.6"/></filter></defs><g clip-path="url(#avc)"><rect width="30" height="30" fill="#a89e94"/><g filter="url(#avb)"><rect x="0" y="0" width="30" height="13" fill="#c9c3bc"/><ellipse cx="4" cy="18" rx="7" ry="8" fill="#1c1814"/><path d="M3 30 C4 20 9 16 15 16 C21 16 25 20 26 30z" fill="#3a3026"/><ellipse cx="15.5" cy="5.2" rx="6.2" ry="4" fill="#191310"/><ellipse cx="15.8" cy="10.8" rx="4.6" ry="5.4" fill="#8e5e44"/><ellipse cx="15.8" cy="15" rx="4.2" ry="2.8" fill="#3d2b22"/><ellipse cx="25.5" cy="11" rx="4" ry="6" fill="#1b1411"/><ellipse cx="27" cy="17" rx="3.2" ry="5" fill="#b77650"/><ellipse cx="12" cy="25" rx="3" ry="2" fill="#6a5038"/></g></g></svg>
<div style="position:absolute;left:1373.8px;top:24.4px;width:14px;height:14px;border-radius:50%;background:#fff"></div>
<svg style="position:absolute;left:1375.1px;top:25.7px" width="11.5" height="11.5" viewBox="0 0 11 11"><circle cx="5.5" cy="5.5" r="5.5" fill="#0866ff"/><path d="M6.1 11V7h1.3l.25-1.5H6.1v-.9c0-.45.2-.75.8-.75h.8V2.5c-.3-.05-.75-.1-1.2-.1-1.2 0-1.9.7-1.9 2v1.1H3.4V7h1.2v4z" fill="#fff"/></svg>
</body></html>
